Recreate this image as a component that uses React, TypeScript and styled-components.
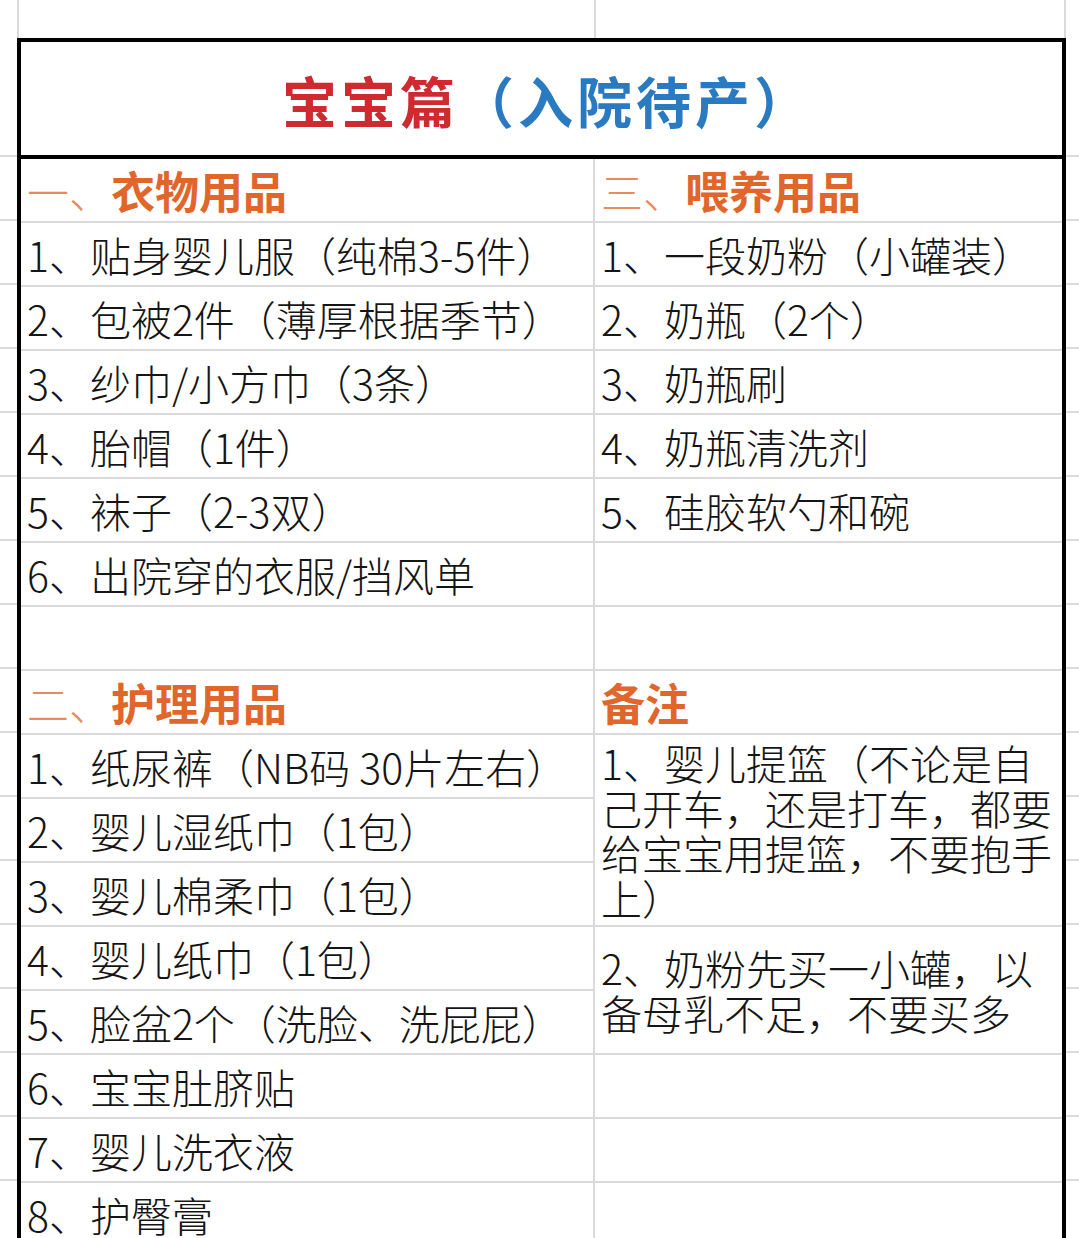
import styled, { createGlobalStyle } from 'styled-components';

const GRID = '#dadada';
const ROW = 64;

interface Item {
  text?: string;
  head?: [string, string];
  span?: number;
}

const leftItems: Item[] = [
  { head: ['一、', '衣物用品'] },
  { text: '1、贴身婴儿服（纯棉3-5件）' },
  { text: '2、包被2件（薄厚根据季节）' },
  { text: '3、纱巾/小方巾（3条）' },
  { text: '4、胎帽（1件）' },
  { text: '5、袜子（2-3双）' },
  { text: '6、出院穿的衣服/挡风单' },
  {},
  { head: ['二、', '护理用品'] },
  { text: '1、纸尿裤（NB码 30片左右）' },
  { text: '2、婴儿湿纸巾（1包）' },
  { text: '3、婴儿棉柔巾（1包）' },
  { text: '4、婴儿纸巾（1包）' },
  { text: '5、脸盆2个（洗脸、洗屁屁）' },
  { text: '6、宝宝肚脐贴' },
  { text: '7、婴儿洗衣液' },
  { text: '8、护臀膏' },
];

const rightItems: Item[] = [
  { head: ['三、', '喂养用品'] },
  { text: '1、一段奶粉（小罐装）' },
  { text: '2、奶瓶（2个）' },
  { text: '3、奶瓶刷' },
  { text: '4、奶瓶清洗剂' },
  { text: '5、硅胶软勺和碗' },
  {},
  {},
  { head: ['', '备注'] },
  { text: '1、婴儿提篮（不论是自己开车，还是打车，都要给宝宝用提篮，不要抱手上）', span: 3 },
  { text: '2、奶粉先买一小罐，以备母乳不足，不要买多', span: 2 },
  {},
  {},
  {},
];

const GlobalStyle = createGlobalStyle`
  html, body {
    margin: 0;
    padding: 0;
    background: #fff;
  }
  body {
    font-family: "Noto Sans CJK SC", "Noto Sans", sans-serif;
  }
`;

const Page = styled.div`
  width: 1079px;
  height: 1238px;
  overflow: hidden;
  background: #fff;
`;

const TopStrip = styled.div`
  display: flex;
  height: 40px;
`;

const TopCell = styled.div<{ $w: number }>`
  width: ${({ $w }) => $w}px;
  flex-shrink: 0;
  border-right: 2px solid ${GRID};
  box-sizing: border-box;
`;

const Main = styled.div`
  display: flex;
  align-items: flex-start;
  margin-top: -2px;
`;

const Gutter = styled.div<{ $grow?: boolean }>`
  display: flex;
  flex-direction: column;
  flex: ${({ $grow }) => ($grow ? '1' : '0 0 17px')};
`;

const GutterCell = styled.div<{ $h: number }>`
  height: ${({ $h }) => $h}px;
  border-bottom: 2px solid ${GRID};
  box-sizing: border-box;
`;

const Frame = styled.div`
  flex: 0 0 1049px;
  border: 4px solid #000;
  box-sizing: border-box;
  background: #fff;
`;

const Title = styled.div`
  height: 113px;
  border-bottom: 4px solid #000;
  display: flex;
  align-items: center;
  justify-content: center;
  padding-left: 12px;
  font-size: 55px;
  font-weight: 700;
  letter-spacing: 4px;
`;

const TitleRed = styled.span`
  color: #cf2a30;
`;

const TitleBlue = styled.span`
  color: #2a7ac2;
`;

const Columns = styled.div`
  display: grid;
  grid-template-columns: 574px 1fr;
`;

const Column = styled.div<{ $divider?: boolean }>`
  display: flex;
  flex-direction: column;
  border-right: ${({ $divider }) => ($divider ? `2px solid ${GRID}` : 'none')};
`;

const Cell = styled.div<{ $span: number }>`
  height: ${({ $span }) => $span * ROW}px;
  border-bottom: 2px solid ${GRID};
  box-sizing: border-box;
  display: flex;
  align-items: center;
  padding: 0 4px 0 6px;
  font-size: 41px;
  font-weight: 300;
  line-height: 45px;
  color: #151515;
  white-space: ${({ $span }) => ($span > 1 ? 'normal' : 'nowrap')};
`;

const HeadLead = styled.span`
  color: #e88a5c;
  font-weight: 300;
  font-size: 42px;
`;

const HeadText = styled.span`
  color: #e0662c;
  font-weight: 700;
  font-size: 44px;
`;

const renderColumn = (items: Item[]) =>
  items.map((item, i) => (
    <Cell key={i} $span={item.span ?? 1}>
      {item.head ? (
        <>
          {item.head[0] && <HeadLead>{item.head[0]}</HeadLead>}
          <HeadText>{item.head[1]}</HeadText>
        </>
      ) : (
        item.text
      )}
    </Cell>
  ));

const gutterRows = [119, ...Array(17).fill(ROW)];

export default function App() {
  return (
    <Page>
      <GlobalStyle />
      <TopStrip>
        <TopCell $w={19} />
        <TopCell $w={577} />
        <TopCell $w={470} />
      </TopStrip>
      <Main>
        <Gutter>
          {gutterRows.map((h, i) => (
            <GutterCell key={i} $h={h} />
          ))}
        </Gutter>
        <Frame>
          <Title>
            <TitleRed>宝宝篇</TitleRed>
            <TitleBlue>（入院待产）</TitleBlue>
          </Title>
          <Columns>
            <Column $divider>{renderColumn(leftItems)}</Column>
            <Column>{renderColumn(rightItems)}</Column>
          </Columns>
        </Frame>
        <Gutter $grow>
          {gutterRows.map((h, i) => (
            <GutterCell key={i} $h={h} />
          ))}
        </Gutter>
      </Main>
    </Page>
  );
}
